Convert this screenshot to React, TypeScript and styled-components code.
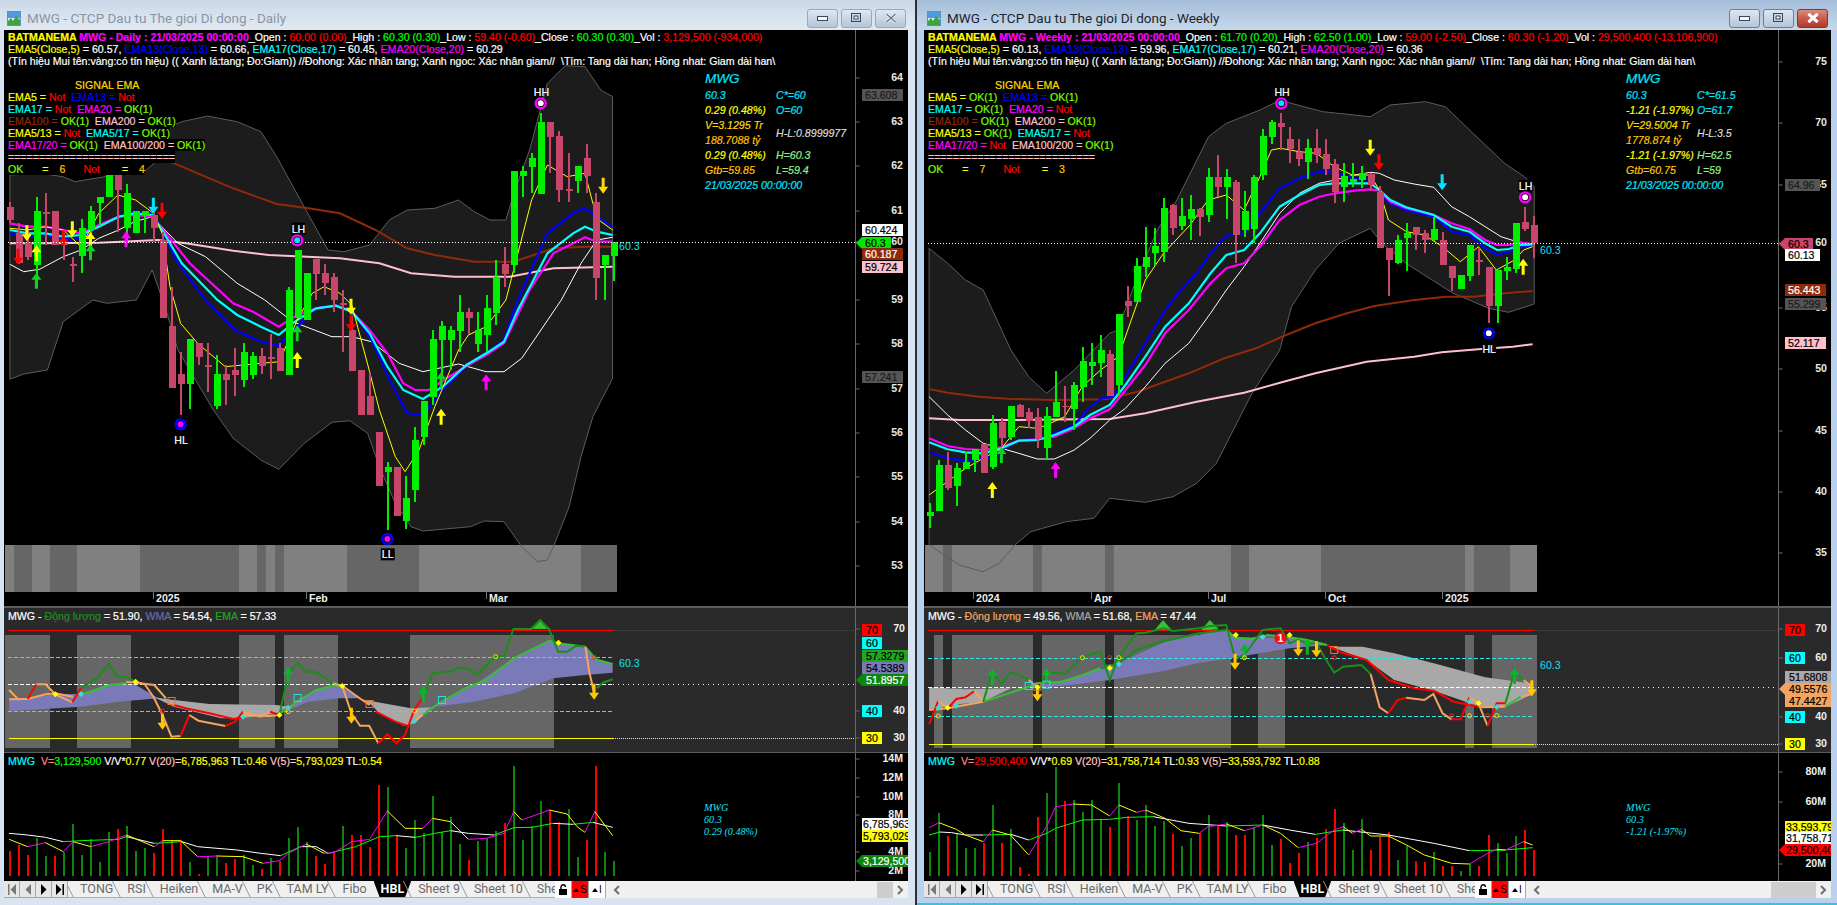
import React from 'react';
import styled, { createGlobalStyle } from 'styled-components';

const Global = createGlobalStyle`
  html, body { margin: 0; padding: 0; background: #d6e3f2; overflow: hidden; }
  #root { width: 1837px; height: 905px; }
`;

const SANS = '"Liberation Sans", Arial, sans-serif';
const UI = 'Roboto, "Noto Sans", sans-serif';

const Desktop = styled.div`
  display: flex;
  width: 1837px;
  height: 905px;
`;
const Divider = styled.div`
  flex: 0 0 2px;
  background: #2a3038;
`;
const Win = styled.section<{ $w: number; $active?: boolean; $pl: number; $pr: number }>`
  flex: 0 0 ${p => p.$w}px;
  box-sizing: border-box;
  height: 905px;
  display: flex;
  flex-direction: column;
  padding: 0 ${p => p.$pr}px 0 ${p => p.$pl}px;
  background: ${p => (p.$active ? '#b9d1ec' : '#d8e4f2')};
  ${p => (p.$active ? 'border-bottom: 2px solid #35c4d8;' : '')}
`;
const TitleBar = styled.header<{ $active?: boolean; $pl: number; $pr: number }>`
  flex: 0 0 30px;
  display: flex;
  align-items: center;
  gap: 6px;
  box-sizing: border-box;
  padding-top: 6px;
  margin: 0 ${p => -p.$pr}px 0 ${p => -p.$pl}px;
  padding-left: ${p => p.$pl + 3}px;
  padding-right: 9px;
  background: ${p =>
    p.$active
      ? 'linear-gradient(180deg,#a4bdd8 0%,#b4cae1 45%,#c6d8ea 100%)'
      : 'linear-gradient(180deg,#c9d7e6 0%,#d7e2ee 50%,#e0e9f3 100%)'};
`;
const TitleText = styled.span<{ $active?: boolean }>`
  font: 13.5px ${UI};
  color: ${p => (p.$active ? '#1c2530' : '#8a95a3')};
  white-space: nowrap;
  flex: 1;
`;
const WinButtons = styled.div`
  display: flex;
  gap: 3px;
`;
const WinButton = styled.div<{ $close?: boolean; $active?: boolean }>`
  width: 31px;
  height: 19px;
  box-sizing: border-box;
  display: flex;
  align-items: center;
  justify-content: center;
  border: 1px solid ${p => (p.$close && p.$active ? '#7c3a33' : p.$active ? '#6d7f95' : '#9aa7b6')};
  border-radius: 3px;
  background: ${p =>
    p.$close && p.$active
      ? 'linear-gradient(180deg,#dc8d80 0%,#c85a4c 50%,#b23a2c 100%)'
      : 'linear-gradient(180deg,#dfe8f2 0%,#c9d6e5 50%,#b5c5d7 100%)'};
`;
const Panes = styled.div`
  flex: 0 0 851px;
  display: flex;
  flex-direction: column;
  background: #000;
`;
const PricePane = styled.div`
  position: relative;
  flex: 0 0 576px;
  overflow: hidden;
`;
const IndPane = styled.div`
  position: relative;
  flex: 0 0 144px;
  background: #2a2a2a;
  overflow: hidden;
`;
const VolPane = styled.div`
  position: relative;
  flex: 0 0 128px;
  background: #000;
  overflow: hidden;
`;
const Sep = styled.div<{ $h: number }>`
  flex: 0 0 ${p => p.$h}px;
  background: #5e5e5e;
`;
const ChartSvg = styled.svg`
  display: block;
  width: 100%;
  height: 100%;
  font-family: ${SANS};
`;
const Legend = styled.div`
  position: absolute;
  top: 1px;
  left: 4px;
  font: 10.6px/12px ${SANS};
  color: #fff;
  white-space: pre;
  -webkit-text-stroke: 0.2px;
`;
const Row = styled.div<{ $pl?: number }>`
  height: 12px;
  padding-left: ${p => p.$pl || 0}px;
`;
const Boxed = styled.span`
  display: inline-block;
  background: #000;
  height: 12px;
`;
const Seg = styled.span<{ $c: string; $ml?: number; $b?: boolean }>`
  color: ${p => p.$c};
  margin-left: ${p => p.$ml || 0}px;
  font-weight: ${p => (p.$b ? 700 : 400)};
`;
const Info = styled.div<{ $left: number }>`
  position: absolute;
  left: ${p => p.$left}px;
  top: 40px;
  display: grid;
  grid-template-columns: 71px auto;
  grid-template-rows: 18px;
  grid-auto-rows: 15px;
  font: italic 10.6px/15px ${SANS};
  white-space: nowrap;
  -webkit-text-stroke: 0.2px;
`;
const InfoTitle = styled.div`
  grid-column: 1 / 3;
  font-size: 13.5px;
  line-height: 18px;
  color: #00e5ff;
`;
const InfoCell = styled.div<{ $c: string; $span?: number }>`
  color: ${p => p.$c};
  grid-row: span ${p => p.$span || 1};
  align-self: center;
`;
const PaneTitle = styled.div`
  position: absolute;
  top: 1px;
  left: 4px;
  font: 10.6px/14px ${SANS};
  color: #fff;
  white-space: pre;
  -webkit-text-stroke: 0.2px;
`;
const SerifNote = styled.div<{ $left: number }>`
  position: absolute;
  left: ${p => p.$left}px;
  top: 49px;
  font: italic 10.2px/12px "Liberation Serif", "Times New Roman", serif;
  color: #12e0f0;
`;
const TabBar = styled.div`
  flex: 0 0 17px;
  display: flex;
  background: #f0f0f0;
  font: 12.5px/16px ${UI};
  color: #6a6a6a;
  box-sizing: border-box;
`;
const NavGroup = styled.div`
  flex: 0 0 64px;
  display: flex;
`;
const NavBtn = styled.div`
  flex: 1;
  display: flex;
  align-items: center;
  justify-content: center;
  background: #e6e6e6;
  border-right: 1px solid #a6a6a6;
  border-bottom: 1px solid #a6a6a6;
  box-sizing: border-box;
`;
const Tabs = styled.div`
  flex: 0 0 487px;
  display: flex;
  padding-left: 5px;
  box-sizing: border-box;
  overflow: hidden;
  border-bottom: 1px solid #b0b0b0;
`;
const Tab = styled.div<{ $on?: boolean }>`
  position: relative;
  flex: 0 0 auto;
  padding: 0 7px;
  white-space: pre;
  ${p =>
    p.$on
      ? `background:#000;color:#fff;font-weight:700;clip-path:polygon(0 0,100% 0,calc(100% - 6px) 100%,6px 100%);`
      : `&::before{content:'';position:absolute;left:-4px;top:0;height:17px;width:1px;background:#9a9a9a;transform:skewX(26deg);}`}
`;
const MiniBtn = styled.div<{ $red?: boolean }>`
  flex: 0 0 17px;
  display: flex;
  align-items: center;
  justify-content: center;
  gap: 1px;
  box-sizing: border-box;
  background: ${p => (p.$red ? '#ff0000' : '#fff')};
  border-right: 1px solid #a8a8a8;
  font: 10px/16px ${SANS};
  color: #000;
`;
const ScrollArea = styled.div`
  flex: 1;
  display: flex;
  align-items: center;
  padding: 0 4px 0 7px;
  background: #f0f0f0;
`;
const ScrollThumb = styled.div<{ $w: number }>`
  margin-left: auto;
  margin-right: 4px;
  width: ${p => p.$w}px;
  height: 16px;
  background: #cdcdcd;
`;

// ---------------------------------------------- data
type P = [number, number];
type C = [number, number, number, number, string];

const candlesL: C[] = [
  [202,207,220,223,'r'],[223,233,263,264,'r'],[230,242,257,260,'r'],[197,211,265,287,'g'],[193,212,212,245,'r'],
  [211,211,245,245,'r'],[233,243,243,260,'r'],[257,264,264,282,'r'],[219,228,256,273,'g'],[206,211,230,253,'g'],
  [197,197,203,226,'g'],[172,172,197,197,'g'],[172,172,190,232,'r'],[184,193,228,243,'g'],[211,211,233,233,'g'],
  [211,211,215,233,'g'],[210,215,228,242,'r'],[232,240,318,318,'r'],[287,326,388,388,'r'],[352,374,384,415,'r'],
  [339,339,384,409,'g'],[343,343,357,365,'r'],[343,365,365,392,'r'],[355,374,406,409,'g'],[365,374,380,405,'r'],
  [348,370,375,396,'r'],[343,352,380,387,'g'],[352,356,375,379,'g'],[348,356,366,374,'r'],[334,357,357,379,'r'],
  [343,348,371,371,'r'],[287,290,375,375,'g'],[250,250,318,318,'g'],[273,273,320,320,'g'],[259,259,274,300,'r'],
  [264,273,283,295,'r'],[273,277,300,312,'r'],[290,303,303,352,'r'],[316,330,371,371,'r'],[370,370,415,415,'r'],
  [374,396,415,415,'r'],[432,432,486,486,'r'],[462,467,472,530,'g'],[467,467,516,516,'r'],[476,498,521,529,'g'],
  [427,440,490,502,'g'],[401,401,437,445,'g'],[330,339,397,405,'g'],[321,326,340,377,'g'],[326,330,340,370,'g'],
  [295,312,331,352,'g'],[308,312,318,334,'r'],[312,330,344,352,'g'],[295,308,335,352,'g'],[260,277,313,325,'g'],
  [247,264,274,287,'r'],[171,171,265,273,'g'],[166,171,176,197,'g'],[153,158,167,193,'g'],[113,122,194,194,'g'],
  [122,122,137,173,'r'],[131,136,190,202,'r'],[153,189,189,202,'r'],[166,166,181,193,'g'],[144,158,176,193,'r'],
  [193,202,278,300,'r'],[255,255,265,300,'g'],[242,242,256,281,'g'],
];

const candlesR: C[] = [
  [1210,1237,1247,1285,'g'],[1080,1095,1233,1233,'g'],[1057,1095,1165,1170,'r'],[1090,1105,1157,1217,'g'],[1055,1085,1107,1107,'g'],
  [1047,1047,1080,1115,'g'],[1032,1032,1120,1120,'r'],[945,968,1100,1107,'g'],[955,965,1015,1040,'r'],[918,918,1012,1020,'g'],
  [912,915,950,952,'r'],[925,935,962,985,'r'],[925,952,1017,1045,'r'],[920,948,1045,1077,'g'],[813,905,950,950,'g'],
  [857,917,917,967,'r'],[845,855,927,990,'g'],[742,783,860,905,'g'],[730,787,797,855,'g'],[705,750,790,830,'g'],
  [750,762,888,888,'r'],[642,642,855,885,'g'],[558,604,617,650,'r'],[474,498,605,605,'g'],[380,472,500,530,'g'],
  [385,437,458,497,'g'],[295,323,455,485,'g'],[313,315,385,405,'r'],[295,348,378,390,'g'],[285,327,357,420,'g'],
  [325,327,352,408,'r'],[205,232,345,365,'g'],[165,232,262,290,'r'],[208,232,262,357,'g'],[240,245,405,490,'r'],
  [273,333,390,412,'g'],[225,230,387,430,'g'],[88,108,225,240,'g'],[60,67,110,132,'g'],[40,70,80,150,'r'],
  [82,118,147,188,'r'],[118,155,177,198,'r'],[118,144,186,237,'g'],[88,145,165,188,'r'],[118,163,208,225,'r'],
  [178,193,277,310,'r'],[190,228,260,305,'g'],[190,237,247,260,'g'],[198,218,240,265,'g'],[220,222,255,273,'r'],
  [258,275,445,445,'r'],[445,445,480,587,'r'],[405,420,488,492,'g'],[370,400,415,513,'g'],[382,382,405,450,'r'],
  [390,400,420,460,'r'],[350,388,420,422,'g'],[397,420,495,495,'r'],[498,498,535,572,'r'],[525,525,567,567,'g'],
  [435,435,527,542,'g'],[445,480,480,525,'r'],[502,502,617,670,'r'],[510,510,617,668,'g'],[472,502,513,540,'g'],
  [368,368,507,518,'g'],[322,365,387,392,'r'],[348,375,430,475,'r'],
];

type Arrow = [number, number, 'u' | 'd', string];
type Ring = [number, number, string, string];

const L = {
  bbUpper: [[25,525],[100,520],[160,530],[190,545],[240,535],[370,510],[390,490],[430,380],[460,365],[525,348],[600,365],[660,395],[700,470],[760,600],[830,750],[870,755],[935,735],[985,660],[1030,630],[1100,625],[1160,600],[1200,635],[1240,660],[1280,660],[1300,580],[1340,450],[1385,250],[1430,197],[1480,200],[1520,270],[1550,290]] as P[],
  bbLower: [[1550,1135],[1500,1250],[1470,1370],[1440,1520],[1400,1640],[1385,1680],[1360,1685],[1320,1640],[1275,1565],[1225,1563],[1190,1580],[1070,1593],[1040,1580],[1000,1510],[960,1400],[930,1300],[885,1262],[840,1267],[770,1330],[705,1408],[660,1380],[590,1315],[540,1230],[500,1150],[450,1050],[420,930],[385,810],[345,900],[270,910],[235,900],[160,965],[120,1110],[60,1122],[25,1138]] as P[],
  blue: [[25,700],[70,710],[115,705],[160,715],[180,720],[205,715],[250,680],[300,650],[340,635],[385,640],[410,690],[450,790],[520,900],[595,990],[660,1025],[705,1037],[752,980],[800,925],[850,916],[890,930],[940,1020],[990,1150],[1030,1240],[1070,1245],[1120,1170],[1180,1095],[1230,1060],[1275,1020],[1310,900],[1385,700],[1450,640],[1480,625],[1510,650],[1550,680]] as P[],
  cyan: [[25,690],[70,700],[115,700],[160,710],[205,705],[250,680],[300,650],[340,640],[385,645],[415,700],[460,790],[550,900],[600,945],[660,980],[705,1005],[752,960],[800,925],[850,917],[890,935],[935,1000],[980,1100],[1020,1170],[1070,1197],[1120,1160],[1180,1095],[1230,1060],[1275,1025],[1310,930],[1385,760],[1450,700],[1480,680],[1510,695],[1550,705]] as P[],
  mag: [[25,670],[70,680],[115,680],[160,690],[205,700],[250,675],[300,650],[340,645],[385,650],[420,700],[480,790],[590,910],[640,935],[705,980],[752,945],[800,925],[850,917],[890,935],[935,990],[980,1060],[1020,1150],[1050,1170],[1085,1170],[1130,1135],[1185,1095],[1230,1065],[1275,1030],[1340,870],[1400,760],[1480,712],[1510,725],[1550,725]] as P[],
  white: [[25,793],[60,815],[100,808],[160,770],[205,750],[250,715],[300,690],[340,665],[385,650],[450,730],[520,770],[600,850],[670,900],[740,965],[840,1010],[890,1010],[940,1025],[1010,1090],[1070,1115],[1160,1092],[1230,1115],[1275,1115],[1320,1075],[1420,900],[1470,790],[1510,720],[1550,712]] as P[],
  yellow: [[25,685],[70,690],[115,680],[160,690],[205,740],[250,640],[298,585],[343,600],[388,640],[410,700],[430,860],[457,970],[500,1030],[570,1100],[615,1095],[707,1085],[752,960],[790,880],[820,860],[860,880],[890,915],[935,1115],[960,1230],[1000,1370],[1025,1415],[1060,1350],[1100,1220],[1160,1050],[1185,1005],[1230,980],[1280,900],[1345,600],[1385,495],[1435,530],[1480,520],[1500,610],[1515,660],[1550,690]] as P[],
  brown: [[25,380],[430,485],[500,520],[590,565],[700,612],[780,625],[860,640],[950,690],[1030,745],[1100,765],[1200,785],[1300,785],[1400,745],[1480,740],[1550,740]] as P[],
  pink: [[25,730],[100,730],[250,728],[400,720],[470,730],[590,752],[680,765],[860,775],[960,790],[1040,820],[1150,830],[1290,830],[1400,805],[1550,800]] as P[],
  arrows: [[68,700,'d','#ffff00'],[183,688,'d','#ffff00'],[1526,557,'d','#ffd800'],[92,760,'u','#ffff00'],[229,720,'u','#ffff00'],[92,842,'u','#10d020'],[229,757,'u','#10d020'],[46,770,'d','#ff0000'],[160,715,'d','#ff0000'],[410,632,'d','#ff0000'],[388,617,'d','#00e5ff'],[319,718,'u','#ff00ff'],[1230,1147,'u','#ff00ff'],[888,920,'d','#ffff00'],[888,970,'d','#ff0000'],[752,1000,'u','#10d020'],[1116,1140,'u','#10d020'],[752,1080,'u','#ffff00'],[1116,1250,'u','#ffff00']] as Arrow[],
  rings: [[1368,310,'#ff00ff','#ffffff'],[752,721,'#ff00ff','#00e5ff'],[457,1273,'#0000ff','#ff00ff'],[980,1617,'#0000ff','#ff00ff']] as Ring[],
  pivots: [['HH',1370,275,false],['LH',755,686,true],['HL',458,1319,false],['LL',981,1663,true]] as [string,number,number,boolean][],
  strip: [[12,35,1],[35,81,0],[81,126,1],[126,195,0],[195,354,1],[354,604,0],[604,650,1],[650,673,0],[673,695,1],[695,718,0],[718,878,1],[878,1060,0],[1060,1469,1],[1469,1562,0]] as [number,number,number][],
  dates: [['2025',153],['Feb',306],['Mar',486]] as [string,number][],
  axis: [[64,78],[63,122],[62,166],[61,211],[60,242],[59,300],[58,344],[57,389],[56,433],[55,477],[54,522],[53,566]] as [number,number][],
  tags: [['63.608',95,'#555555','#1c1c1c',41],['57.241',377,'#555555','#1c1c1c',41],['60.424',230,'#ffffff','#000',41],['60.3',243,'#00e800','#000',29,'a'],['60.187',254,'#8f2a08','#fff',41],['59.724',267,'#ffc0cb','#000',41]] as any[],
};

const R = {
  bbUpper: [[23,445],[70,490],[115,540],[160,570],[230,750],[275,830],[320,880],[390,810],[480,700],[500,690],[547,540],[600,390],[650,300],[730,110],[775,70],[860,30],[912,0],[939,10],[1019,35],[1139,50],[1189,15],[1279,5],[1329,20],[1399,100],[1479,190],[1529,230],[1554,260]] as P[],
  bbLower: [[1554,612],[1489,637],[1439,625],[1349,580],[1229,490],[1169,430],[1139,385],[1060,430],[1000,510],[940,620],[910,750],[840,880],[750,1090],[700,1150],[640,1190],[570,1207],[480,1195],[440,1255],[370,1265],[280,1295],[240,1335],[200,1390],[160,1415],[100,1395],[30,1340],[23,1335]] as P[],
  blue: [[23,1057],[70,1075],[115,1082],[160,1075],[190,1070],[206,1050],[250,1020],[297,1017],[340,1000],[390,975],[430,920],[460,895],[490,890],[520,830],[560,750],[620,630],[660,570],[700,520],[735,460],[775,407],[820,400],[860,340],[910,265],[960,235],[1010,215],[1040,215],[1100,235],[1140,240],[1162,275],[1190,310],[1230,330],[1300,350],[1345,395],[1390,405],[1430,445],[1460,465],[1490,455],[1520,440],[1550,435]] as P[],
  cyan: [[23,1027],[70,1048],[115,1057],[160,1060],[206,1045],[250,1022],[297,1020],[340,1005],[390,980],[430,945],[480,915],[520,855],[570,770],[620,680],[680,610],[735,520],[775,465],[820,450],[860,400],[910,320],[960,285],[1010,255],[1050,250],[1100,250],[1140,250],[1162,270],[1190,300],[1230,322],[1300,345],[1345,380],[1390,395],[1430,430],[1460,450],[1490,447],[1520,435],[1550,433]] as P[],
  mag: [[23,1015],[70,1038],[115,1047],[160,1050],[206,1042],[250,1022],[297,1018],[340,1010],[390,985],[430,955],[480,928],[520,870],[570,795],[620,700],[680,630],[735,550],[775,505],[820,490],[860,440],[910,360],[960,315],[1010,290],[1050,280],[1100,272],[1140,268],[1162,272],[1190,305],[1230,325],[1300,345],[1345,370],[1390,387],[1430,420],[1460,435],[1490,435],[1520,428],[1550,432]] as P[],
  white: [[23,890],[70,945],[115,990],[160,1030],[206,1045],[250,1060],[297,1077],[340,1077],[390,1050],[430,1015],[480,960],[520,925],[570,860],[620,790],[680,730],[735,640],[775,570],[820,500],[860,430],[910,340],[960,280],[1010,250],[1050,240],[1100,225],[1140,217],[1162,220],[1200,240],[1250,252],[1300,262],[1345,320],[1390,350],[1430,380],[1470,410],[1510,425],[1550,432]] as P[],
  yellow: [[23,1185],[69,1145],[115,1105],[160,1075],[206,1045],[250,980],[297,985],[320,975],[366,950],[410,860],[457,810],[502,770],[570,540],[616,460],[683,375],[729,300],[775,285],[820,330],[860,230],[889,150],[912,145],[960,155],[1003,160],[1048,200],[1094,225],[1139,225],[1162,270],[1185,360],[1231,395],[1276,405],[1322,440],[1367,485],[1413,440],[1458,510],[1504,480],[1527,450],[1550,440]] as P[],
  brown: [[23,867],[70,878],[150,890],[230,897],[340,900],[470,898],[550,875],[680,820],[770,775],[850,745],[920,708],[1000,670],[1080,640],[1150,618],[1250,600],[1330,590],[1400,590],[1480,580],[1550,573]] as P[],
  pink: [[23,955],[100,960],[230,960],[400,958],[480,957],[570,940],[700,905],[820,878],[920,845],[1000,820],[1130,785],[1250,770],[1320,757],[1420,747],[1500,740],[1550,733]] as P[],
  arrows: [[183,1170,'u','#ffff00'],[206,1065,'u','#10d020'],[343,1110,'u','#ff00ff'],[1139,143,'d','#ffff00'],[1161,187,'d','#ff0000'],[1321,247,'d','#00e5ff'],[1526,500,'u','#ffff00']] as Arrow[],
  rings: [[914,10,'#ff00ff','#00e5ff'],[1531,292,'#ff00ff','#ffffff'],[1439,700,'#0000ff','#ffffff']] as Ring[],
  pivots: [['HH',916,-25,false],['LH',1532,257,true],['HL',1440,746,true]] as [string,number,number,boolean][],
  strip: [[12,35,1],[35,58,1],[58,81,0],[81,287,1],[287,309,0],[309,468,1],[468,491,0],[491,787,1],[787,832,0],[832,1014,1],[1014,1378,0],[1378,1401,1],[1401,1492,0],[1492,1562,1]] as [number,number,number][],
  dates: [['2024',973],['Apr',1091],['Jul',1208],['Oct',1325],['2025',1442]] as [string,number][],
  axis: [[75,62],[70,123],[65,185],[60,243],[55,308],[50,369],[45,431],[40,492],[35,553]] as [number,number][],
  tags: [['64.96',185,'#555555','#1c1c1c',35],['60.3',244,'#c8466a','#000',28,'a'],['60.13',255,'#ffffff','#000',35],['56.443',290,'#8f2a08','#fff',41],['55.299',304,'#555555','#1c1c1c',41],['52.117',343,'#ffc0cb','#000',41]] as any[],
};

const Gd = '#188f18', Gl = '#35c035', O = '#f4a460', Rd = '#ff0000';

const indL = {
  bands: [[12,126],[195,331],[604,695],[718,855],[1037,1401]] as P[],
  lv: { red: 121, c1: 202, w: 283, c2: 365, y: 445 },
  ribbons: [
    ['#7a7ab8',[[23,328],[70,325],[140,313],[205,312],[270,285],[340,282],[400,325],[300,335],[205,350],[100,358],[23,363]]],
    ['#a8a8a8',[[390,322],[440,330],[530,342],[700,345],[730,350],[700,370],[610,385],[560,385],[440,350]]],
    ['#7a7ab8',[[718,365],[750,335],[800,300],[860,287],[910,325],[860,325],[780,335]]],
    ['#a8a8a8',[[910,327],[1040,355],[1090,352],[1050,400],[1020,407],[960,370],[940,345]]],
    ['#7a7ab8',[[1060,375],[1110,340],[1200,285],[1300,205],[1390,152],[1440,165],[1480,170],[1505,205],[1550,220],[1550,248],[1480,255],[1400,265],[1300,310],[1200,335],[1090,352]]],
    [Gl,[[1340,117],[1367,88],[1392,117]]],
  ] as [string,P[]][],
  mom: [
    [O,[[23,300],[45,327],[70,327]]],[Rd,[[70,327],[92,283]]],[O,[[92,283],[115,283],[140,313],[183,337]]],[Rd,[[183,337],[205,295]]],
    [Gd,[[205,295],[250,260],[275,222],[297,260],[320,262],[343,275]]],[O,[[343,275],[366,283],[388,320],[411,375],[434,440],[457,438]]],
    [Rd,[[457,438],[479,375]]],[O,[[479,375],[502,392],[570,408]]],[Rd,[[570,408],[595,395],[615,365]]],[O,[[615,365],[660,380],[683,365]]],
    [Rd,[[683,365],[707,375]]],[Gd,[[707,375],[729,255],[752,218],[775,245],[798,245],[843,280]]],[O,[[843,280],[866,288],[889,370],[911,407],[934,407],[957,460]]],
    [Rd,[[957,460],[980,433],[1003,460],[1025,435],[1048,360],[1071,320]]],
    [Gd,[[1071,320],[1094,250],[1116,245],[1139,245],[1162,233],[1185,235],[1207,255],[1253,200],[1276,198],[1299,117],[1345,117],[1367,90],[1390,120],[1412,185],[1435,185],[1458,167],[1481,170]]],
    [O,[[1481,170],[1490,240],[1503,310]]],[Gd,[[1510,295],[1525,278],[1550,268]]],
  ] as [string,P[]][],
  ema: [
    [O,[[23,328],[70,327],[115,313],[140,310],[185,320]]],[Gl,[[205,312],[230,305],[275,285],[320,280]]],[O,[[320,275],[390,285],[420,325]]],
    [Rd,[[440,345],[470,355],[530,370],[590,387],[610,383]]],[O,[[615,375],[680,378],[707,375]]],[Gl,[[707,370],[730,355],[750,335],[800,300],[843,287],[866,287]]],
    [O,[[866,287],[910,325],[935,345]]],[Rd,[[950,365],[1000,395],[1030,407]]],[O,[[1045,395],[1070,375]]],
    [Gl,[[1070,375],[1110,340],[1180,293],[1230,270],[1300,205],[1390,152],[1412,160],[1480,170],[1510,210],[1550,222]]],
  ] as [string,P[]][],
  diamondsY: [[140,313],[343,275],[707,375],[866,288],[1413,158]] as P[],
  diamondsC: [[205,312],[729,353],[615,380],[1048,393]] as P[],
  sqC: [[753,324],[1118,330]] as P[],
  sqO: [[434,333],[935,342]] as P[],
  holoY: [[729,365],[1254,200],[1049,363]] as P[],
  holoR: [[411,363],[1503,202]] as P[],
  arrows: [[411,395,'d','#ffc800'],[889,377,'d','#ffc800'],[1503,305,'d','#ffc800'],[729,255,'u','#10b030'],[1071,312,'u','#10b030']] as Arrow[],
  oy: 590,
  lastX: 1550,
};
const indR = {
  bands: [[35,58],[81,287],[309,468],[491,787],[855,923],[1378,1401],[1447,1562]] as P[],
  lv: { red: 91, c1: 175, w: 262, c2: 350, y: 433 },
  ribbons: [
    ['#a8a8a8',[[23,262],[115,268],[230,265],[160,305],[100,312],[23,330]]],
    ['#7a7ab8',[[270,262],[330,250],[410,225],[470,195],[500,190],[620,125],[730,98],[775,90],[800,110],[860,115],[935,110],[1030,135],[935,145],[860,160],[787,175],[700,190],[620,212],[480,240],[380,255],[320,262]]],
    ['#a8a8a8',[[1040,140],[1120,140],[1200,160],[1300,190],[1430,232],[1545,250],[1545,285],[1480,320],[1420,322],[1300,272],[1200,240],[1130,180]]],
    [Gl,[[592,92],[615,60],[638,92]]],
    [Gl,[[710,92],[733,60],[756,88]]],
  ] as [string,P[]][],
  mom: [
    [Rd,[[23,373],[46,303]]],[O,[[46,303],[70,325]]],[Rd,[[70,325],[92,297],[115,292],[138,273]]],[O,[[138,273],[160,305]]],
    [Gd,[[160,305],[183,215],[206,253],[229,217],[252,225],[275,240]]],[O,[[275,240],[297,262]]],
    [Gd,[[297,280],[320,220],[343,218],[366,222],[411,170],[457,155],[480,240],[503,170],[548,100],[571,98],[616,85],[640,93],[706,85],[733,78],[775,75],[797,175],[821,165],[867,90],[912,85],[935,130],[957,120],[980,130],[1003,130],[1025,175],[1048,218],[1071,200],[1117,195],[1140,222]]],
    [O,[[1140,222],[1163,322],[1185,340]]],[Rd,[[1185,340],[1208,300],[1230,293]]],[O,[[1230,293],[1276,300],[1299,282],[1322,340],[1345,358]]],
    [Rd,[[1345,358],[1368,358],[1390,292]]],[O,[[1390,292],[1413,310],[1436,378]]],[Rd,[[1436,378],[1459,310],[1481,310]]],
    [Gd,[[1481,310],[1504,215],[1527,240]]],[O,[[1527,240],[1550,262]]],
  ] as [string,P[]][],
  ema: [
    [O,[[23,330],[70,325],[160,305]]],
    [Gl,[[160,305],[270,262],[297,250],[360,245],[411,225],[457,205]]],
    [Gd,[[457,205],[503,190],[548,150],[620,122],[706,100],[775,90]]],
    [Gl,[[775,90],[800,115],[840,116],[880,105],[935,112],[980,120],[1030,135]]],
    [Rd,[[1030,135],[1060,155],[1130,180],[1185,240],[1250,265],[1300,272],[1350,305],[1420,322]]],
    [O,[[1420,322],[1480,320]]],[Gl,[[1480,320],[1520,290]]],[O,[[1520,290],[1550,282]]],
  ] as [string,P[]][],
  diamondsY: [[70,323],[297,262],[480,204],[799,105],[935,105],[1413,310]] as P[],
  diamondsC: [[46,323],[92,317],[503,192],[867,111],[1390,305],[1459,321]] as P[],
  sqC: [[275,258],[320,254]] as P[],
  sqO: [[297,260],[1048,150]] as P[],
  holoY: [[46,348],[411,173],[503,173],[821,173],[1390,347],[1459,347]] as P[],
  holoR: [[480,173],[1048,173],[1345,347],[1436,347]] as P[],
  arrows: [[183,230,'u','#10b030'],[320,228,'u','#10b030'],[821,155,'u','#10b030'],[980,140,'u','#10b030'],[1504,228,'u','#10b030'],[297,280,'d','#ffc800'],[797,185,'d','#ffc800'],[957,145,'d','#ffc800'],[1003,148,'d','#ffc800'],[1548,265,'d','#ffc800']] as Arrow[],
  oy: 600,
  lastX: 1550,
  badge: [912,115] as P,
};

const volL = {
  base: 857,
  bars: 'r783 r765 r795 g745 g798 r798 g785 g703 g795 g748 g816 g727 r717 g708 g783 g775 r790 r717 r750 r750 g816 r852 g798 g795 r820 r808 g795 g825 r838 g805 r813 g745 g712 g757 r798 r822 r787 g708 r735 r735 r770 r585 g591 r735 g775 g690 g730 g618 g725 g682 g763 r810 g753 g745 g723 r700 g528 g750 g708 g633 r660 r697 g657 g800 r750 r528 g786 g813'.split(' '),
  ma: [[23,730],[70,735],[115,742],[160,755],[205,752],[300,748],[320,740],[390,760],[460,755],[500,770],[600,780],[660,790],[710,797],[760,770],[800,770],[830,790],[900,770],[960,740],[1003,737],[1050,742],[1100,730],[1140,722],[1185,730],[1250,735],[1300,713],[1345,712],[1400,700],[1450,703],[1500,697],[1550,712]] as P[],
  v5: [[23,748],[70,770],[115,758],[160,785],[185,755],[230,770],[275,755],[320,735],[390,770],[412,752],[457,752],[500,800],[550,798],[615,800],[665,820],[707,812],[730,790],[775,762],[820,790],[845,788],[890,755],[935,748],[980,663],[1025,715],[1070,715],[1094,685],[1140,695],[1185,748],[1230,745],[1275,730],[1300,665],[1320,690],[1390,660],[1435,672],[1460,710],[1480,727],[1505,665],[1550,737]] as P[],
  oy: 590,
};
const volR = {
  base: 827,
  bars: 'g757 g640 r708 g700 g745 g745 r730 g616 r730 g688 r800 r823 r652 g580 g502 r604 g600 g637 g600 g657 r681 g549 r649 g660 g616 g678 g664 r702 g738 g714 r700 g645 r678 g665 r705 r705 g680 g645 g735 r717 r790 r760 g726 r714 r687 r627 g670 g750 g657 r750 r710 r697 g780 g737 r783 r786 g757 r798 r798 g813 g790 r797 r705 g729 g760 g708 r690 r750'.split(' '),
  ma: [[23,705],[50,696],[80,698],[115,705],[160,705],[230,703],[275,720],[320,700],[343,685],[411,660],[480,658],[525,652],[590,650],[680,670],[775,678],[867,675],[935,690],[1000,703],[1070,690],[1185,705],[1300,730],[1390,752],[1480,750],[1550,743]] as P[],
  v5: [[23,683],[48,668],[92,688],[115,705],[160,725],[183,690],[229,705],[275,765],[320,680],[343,620],[388,612],[434,615],[480,648],[503,615],[548,637],[571,630],[620,655],[660,692],[706,700],[729,680],[775,672],[821,692],[867,675],[912,700],[957,743],[1003,730],[1048,690],[1071,680],[1094,700],[1117,688],[1140,708],[1185,708],[1231,735],[1276,765],[1345,790],[1390,792],[1436,760],[1459,748],[1481,750],[1527,725],[1550,735]] as P[],
  oy: 600,
};

const num = (n: number) => n.toFixed(1);

// ---------------------------------------------- drawing helpers
const ArrowMark = ({ x, y, dir, c }: { x: number; y: number; dir: 'u' | 'd'; c: string }) => {
  const s = dir === 'u' ? -1 : 1;
  const pts: P[] = [[x, y + 8 * s], [x + 5, y + 1 * s], [x + 1.5, y + 1 * s], [x + 1.5, y - 8 * s], [x - 1.5, y - 8 * s], [x - 1.5, y + 1 * s], [x - 5, y + 1 * s]];
  return <polygon points={pts.map(p => p.join(',')).join(' ')} fill={c} />;
};

const Tag = ({ x, y, w, bg, fg, text, arrow, center, pad = 3 }: any) => (
  <g>
    {arrow && <polygon points={`${x},${y - 6} ${x - 6},${y} ${x},${y + 6}`} fill={bg} />}
    <rect x={x} y={y - 6} width={w} height={12} fill={bg} shapeRendering="crispEdges" />
    <text x={center ? x + w / 2 : x + pad} y={y + 4} fontSize={10.6} fill={fg} stroke={fg} strokeWidth={0.2} textAnchor={center ? 'middle' : 'start'}>{text}</text>
  </g>
);

const ln = (pts: P[], fx: (x: number) => number, fy: (y: number) => number) => pts.map(p => `${num(fx(p[0]))},${num(fy(p[1]))}`).join(' ');

const PriceChart = ({ ox, left, width, axisX, tagX, oy, d, candles, cy, dotY, numEnd, note, noteY }: any) => {
  const fx = (x: number) => ox + x / 2.53;
  const fy = (y: number) => oy + y / 3;
  const bbPoly = ln([...d.bbUpper, ...d.bbLower], fx, fy);
  return (
    <ChartSvg viewBox={`${left} 30 ${width} 576`}>
      <polygon points={bbPoly} fill="#1c1c1c" />
      {d.strip.map((s: number[], i: number) => (
        <rect key={i} x={fx(s[0])} y={545} width={(s[1] - s[0]) / 2.53} height={47} fill={s[2] ? '#808080' : '#666666'} shapeRendering="crispEdges" />
      ))}
      <polygon points={bbPoly} fill="none" stroke="#5c5c5c" strokeWidth={1} />
      <polyline points={ln(d.brown, fx, fy)} fill="none" stroke="#8f2a08" strokeWidth={2} />
      <polyline points={ln(d.pink, fx, fy)} fill="none" stroke="#ffc0cb" strokeWidth={2} />
      <polyline points={ln(d.white, fx, fy)} fill="none" stroke="#ffffff" strokeWidth={1} />
      <polyline points={ln(d.blue, fx, fy)} fill="none" stroke="#0000ff" strokeWidth={2.2} />
      <polyline points={ln(d.mag, fx, fy)} fill="none" stroke="#ff00ff" strokeWidth={2.2} />
      <polyline points={ln(d.cyan, fx, fy)} fill="none" stroke="#00ffff" strokeWidth={2.2} />
      <polyline points={ln(d.yellow, fx, fy)} fill="none" stroke="#ffff00" strokeWidth={1} />
      {candles.map((c: C, i: number) => {
        const x = Math.round(ox + 9.88 + i * 9.01);
        const col = c[4] === 'g' ? '#00f000' : '#c8466a';
        const h = Math.max(cy(c[2]) - cy(c[1]), 1.5);
        return (
          <g key={i} shapeRendering="crispEdges">
            <rect x={x - 1} y={cy(c[0])} width={2} height={cy(c[3]) - cy(c[0])} fill={col} />
            <rect x={x - 3.5} y={cy(c[1])} width={7} height={h} fill={col} />
          </g>
        );
      })}
      {d.arrows.map((a: Arrow, i: number) => <ArrowMark key={i} x={fx(a[0])} y={fy(a[1])} dir={a[2]} c={a[3]} />)}
      <line x1={left + 4} x2={axisX} y1={dotY} y2={dotY} stroke="#fff" strokeDasharray="1 2" />
      {d.pivots.map((p: any, i: number) => (
        <g key={i}>
          {p[3] && <rect x={fx(p[1]) - 7} y={fy(p[2]) - 6} width={14} height={12} fill="#000" />}
          <text x={fx(p[1])} y={fy(p[2]) + 4} fontSize={10.6} fill="#fff" stroke="#fff" strokeWidth={0.2} textAnchor="middle">{p[0]}</text>
        </g>
      ))}
      {d.rings.map((r: Ring, i: number) => (
        <g key={i}>
          <circle cx={fx(r[0])} cy={fy(r[1])} r={5} fill="#000" stroke={r[2]} strokeWidth={2.4} />
          <circle cx={fx(r[0])} cy={fy(r[1])} r={3} fill={r[3]} />
        </g>
      ))}
      <text x={note} y={noteY} fontSize={10.6} fill="#12e0f0">60.3</text>
      <line x1={axisX} x2={axisX} y1={30} y2={606} stroke="#6a6a6a" />
      {d.axis.map((a: number[]) => (
        <g key={a[0]}>
          <line x1={axisX} x2={axisX + 4} y1={a[1]} y2={a[1]} stroke="#6a6a6a" />
          <text x={numEnd} y={a[1] + 3} fontSize={10.6} fontWeight={700} fill="#e8e8e8" textAnchor="end">{a[0]}</text>
        </g>
      ))}
      {d.tags.map((t: any[]) => (
        <Tag key={t[0]} x={tagX} y={t[1]} w={t[4]} bg={t[2]} fg={t[3]} text={t[0]} arrow={t[5]} />
      ))}
      {d.dates.map((t: any[]) => (
        <g key={t[1]}>
          <rect x={t[1]} y={592} width={1} height={7} fill="#777" />
          <text x={t[1] + 3} y={602} fontSize={10.6} fontWeight={700} fill="#eee">{t[0]}</text>
        </g>
      ))}
    </ChartSvg>
  );
};

const IndChart = ({ ox, left, width, axisX, d, numEnd, tags, levels, note }: any) => {
  const fx = (x: number) => ox + x / 2.53;
  const fy = (y: number) => d.oy + y / 3;
  const lineEnd = fx(d.lastX);
  const L0 = fx(20);
  return (
    <ChartSvg viewBox={`${left} 608 ${width} 144`}>
      {d.bands.map((b: P, i: number) => (
        <rect key={i} x={fx(b[0])} y={635} width={(b[1] - b[0]) / 2.53} height={112.5} fill="#666666" shapeRendering="crispEdges" />
      ))}
      {d.ribbons.map((r: any[], i: number) => <polygon key={i} points={ln(r[1], fx, fy)} fill={r[0]} />)}
      <line x1={L0} x2={lineEnd} y1={fy(d.lv.red)} y2={fy(d.lv.red)} stroke="#ff0000" strokeWidth={1} shapeRendering="crispEdges" />
      <line x1={lineEnd} x2={axisX} y1={fy(d.lv.red)} y2={fy(d.lv.red)} stroke="#ff0000" strokeDasharray="1 1" shapeRendering="crispEdges" />
      <line x1={L0} x2={lineEnd} y1={fy(d.lv.c1)} y2={fy(d.lv.c1)} stroke="#2fe6e6" strokeDasharray="4 2" shapeRendering="crispEdges" />
      <line x1={L0} x2={lineEnd} y1={fy(d.lv.c2)} y2={fy(d.lv.c2)} stroke="#2fe6e6" strokeDasharray="4 2" shapeRendering="crispEdges" />
      <line x1={L0} x2={lineEnd} y1={fy(d.lv.w)} y2={fy(d.lv.w)} stroke="#fff" strokeDasharray="4 2" shapeRendering="crispEdges" />
      <line x1={lineEnd} x2={axisX} y1={fy(d.lv.w)} y2={fy(d.lv.w)} stroke="#fff" strokeDasharray="1 4" shapeRendering="crispEdges" />
      <line x1={fx(23)} x2={lineEnd} y1={fy(d.lv.y)} y2={fy(d.lv.y)} stroke="#ffff00" shapeRendering="crispEdges" />
      <line x1={lineEnd} x2={axisX} y1={fy(d.lv.y)} y2={fy(d.lv.y)} stroke="#ffff00" strokeDasharray="1 1" shapeRendering="crispEdges" />
      {d.ema.map((s: any[], i: number) => <polyline key={i} points={ln(s[1], fx, fy)} fill="none" stroke={s[0]} strokeWidth={2} />)}
      {d.mom.map((s: any[], i: number) => <polyline key={i} points={ln(s[1], fx, fy)} fill="none" stroke={s[0]} strokeWidth={2} />)}
      {d.arrows.map((a: Arrow, i: number) => <ArrowMark key={i} x={fx(a[0])} y={fy(a[1])} dir={a[2]} c={a[3]} />)}
      {d.sqC.map((p: P, i: number) => <rect key={i} x={fx(p[0]) - 3.5} y={fy(p[1]) - 3.5} width={7} height={7} fill="none" stroke="#20e0e8" />)}
      {d.sqO.map((p: P, i: number) => <rect key={i} x={fx(p[0]) - 3.5} y={fy(p[1]) - 3.5} width={7} height={7} fill="none" stroke="#f07030" />)}
      {d.holoY.map((p: P, i: number) => <circle key={i} cx={fx(p[0])} cy={fy(p[1])} r={2} fill="none" stroke="#ffe000" />)}
      {d.holoR.map((p: P, i: number) => <circle key={i} cx={fx(p[0])} cy={fy(p[1])} r={2} fill="none" stroke="#ff2020" />)}
      {d.diamondsY.map((p: P, i: number) => { const x = fx(p[0]), y = fy(p[1]); return <polygon key={i} points={`${x},${y - 3} ${x + 3},${y} ${x},${y + 3} ${x - 3},${y}`} fill="#ffff00" />; })}
      {d.diamondsC.map((p: P, i: number) => { const x = fx(p[0]), y = fy(p[1]); return <polygon key={i} points={`${x},${y - 3} ${x + 3},${y} ${x},${y + 3} ${x - 3},${y}`} fill="#40d8d8" />; })}
      {d.badge && (
        <g>
          <circle cx={fx(d.badge[0])} cy={fy(d.badge[1])} r={6} fill="#f01010" />
          <text x={fx(d.badge[0])} y={fy(d.badge[1]) + 4} fontSize={10.6} fontWeight={700} fill="#fff" textAnchor="middle">1</text>
        </g>
      )}
      <text x={note[0]} y={note[1]} fontSize={10.6} fill="#12e0f0">60.3</text>
      <line x1={axisX} x2={axisX} y1={608} y2={752} stroke="#6a6a6a" />
      {levels.map((l: number[]) => (
        <g key={l[0]}>
          <line x1={axisX} x2={axisX + 4} y1={l[1]} y2={l[1]} stroke="#6a6a6a" />
          <text x={numEnd} y={l[1] + 3} fontSize={10.6} fontWeight={700} fill="#eee" textAnchor="end">{l[0]}</text>
        </g>
      ))}
      {tags.map((t: any, i: number) => <Tag key={i} {...t} />)}
    </ChartSvg>
  );
};

const VolChart = ({ ox, left, width, axisX, d, ticks, numEnd, tags }: any) => {
  const fx = (x: number) => ox + x / 2.53;
  const fy = (y: number) => d.oy + y / 3;
  const segs = (pts: P[], up: string, down: string) =>
    pts.slice(1).map((p, i) => (
      <line key={i} x1={fx(pts[i][0])} y1={fy(pts[i][1])} x2={fx(p[0])} y2={fy(p[1])} stroke={p[1] < pts[i][1] ? up : down} strokeWidth={1} />
    ));
  return (
    <ChartSvg viewBox={`${left} 753 ${width} 128`}>
      {d.bars.map((b: string, i: number) => {
        const x = Math.round(ox + 9.88 + i * 9.01);
        const top = fy(parseInt(b.slice(1), 10));
        return <rect key={i} x={x - 1} y={top} width={2} height={fy(d.base) - top} fill={b[0] === 'g' ? '#0c860c' : '#ff0000'} shapeRendering="crispEdges" />;
      })}
      {segs(d.ma, '#00ff00', '#ffffff')}
      {segs(d.v5, '#ff00ff', '#ffff00')}
      <line x1={axisX} x2={axisX} y1={753} y2={881} stroke="#6a6a6a" />
      {ticks.map((t: any[]) => (
        <g key={t[0]}>
          <line x1={axisX} x2={axisX + 4} y1={t[1]} y2={t[1]} stroke="#6a6a6a" />
          <text x={numEnd} y={t[1] + 3} fontSize={10.6} fontWeight={700} fill="#eee" textAnchor="end">{t[0]}</text>
        </g>
      ))}
      {tags.map((t: any, i: number) => <Tag key={i} {...t} />)}
    </ChartSvg>
  );
};

const AppIcon = () => (
  <svg width="14" height="15" viewBox="0 0 14 15">
    <rect x="0.5" y="0.5" width="13" height="14" fill="#dfeefb" stroke="#5b8fc7" />
    <rect x="1" y="1" width="12" height="6" fill="#4f9ae0" />
    <path d="M1 14 L1 10 L4 7 L6 10 L9 5 L13 9 L13 14 Z" fill="#3fa33f" />
  </svg>
);
const MinGlyph = () => (<svg width="11" height="7" viewBox="0 0 11 7"><rect x="0.5" y="1.5" width="10" height="4" fill="#f4f7fb" stroke="#3a4654" /></svg>);
const MaxGlyph = () => (<svg width="11" height="10" viewBox="0 0 11 10"><rect x="0.5" y="0.5" width="9" height="8" fill="none" stroke="#3a4654" /><rect x="3" y="3" width="4" height="3" fill="#f4f7fb" stroke="#3a4654" /></svg>);
const CloseGlyph = ({ light }: { light?: boolean }) => (
  <svg width="12" height="10" viewBox="0 0 12 10">
    <path d="M1.5 1 L10.5 9 M10.5 1 L1.5 9" stroke={light ? '#fff' : '#f2f5f9'} strokeWidth="3" />
    <path d="M1.5 1 L10.5 9 M10.5 1 L1.5 9" stroke={light ? '#fff' : '#6a7583'} strokeWidth={light ? 2.6 : 1.4} />
  </svg>
);
const NavGlyph = ({ kind, c }: { kind: string; c: string }) => (
  <svg width="10" height="11" viewBox="0 0 10 11">
    {kind === 'first' && <path d="M1 0h1.5v11H1zM9 0v11L3.5 5.5z" fill={c} />}
    {kind === 'prev' && <path d="M8 0v11L2.5 5.5z" fill={c} />}
    {kind === 'next' && <path d="M2 0v11L7.5 5.5z" fill={c} />}
    {kind === 'last' && <path d="M1 0v11L6.5 5.5zM7.5 0H9v11H7.5z" fill={c} />}
  </svg>
);
const LockGlyph = () => (
  <svg width="10" height="11" viewBox="0 0 10 11">
    <path d="M3 5V3a2.2 2.2 0 0 1 4.4 0" fill="none" stroke="#000" strokeWidth="1.4" />
    <rect x="1" y="5" width="8" height="6" fill="#000" />
  </svg>
);
const Tri = () => (<svg width="6" height="4" viewBox="0 0 6 4"><path d="M0 4 L3 0 L6 4 Z" fill="#000" /></svg>);
const Chevron = ({ dir }: { dir: 'l' | 'r' }) => (
  <svg width="7" height="10" viewBox="0 0 7 10">
    <path d={dir === 'l' ? 'M6 1 L2 5 L6 9' : 'M1 1 L5 5 L1 9'} fill="none" stroke="#6e6e6e" strokeWidth="2" />
  </svg>
);

const TAB_NAMES = ['TONG', 'RSI', 'Heiken', 'MA-V', 'PK', 'TAM LY', 'Fibo', 'HBL', 'Sheet 9', 'Sheet 10', 'Sheet 11'];

const Sheets = ({ thumb }: { thumb: number }) => (
  <TabBar>
    <NavGroup>
      <NavBtn><NavGlyph kind="first" c="#777" /></NavBtn>
      <NavBtn><NavGlyph kind="prev" c="#777" /></NavBtn>
      <NavBtn><NavGlyph kind="next" c="#000" /></NavBtn>
      <NavBtn><NavGlyph kind="last" c="#000" /></NavBtn>
    </NavGroup>
    <Tabs>
      {TAB_NAMES.map(n => <Tab key={n} $on={n === 'HBL'}>{n}</Tab>)}
    </Tabs>
    <MiniBtn><LockGlyph /></MiniBtn>
    <MiniBtn $red><Tri />S</MiniBtn>
    <MiniBtn><Tri />I</MiniBtn>
    <ScrollArea>
      <Chevron dir="l" />
      <ScrollThumb $w={thumb} />
      <Chevron dir="r" />
    </ScrollArea>
  </TabBar>
);

type SegT = [string, string, number?, boolean?];
const Segs = ({ s }: { s: SegT[] }) => (
  <>
    {s.map((x, i) => <Seg key={i} $c={x[1]} $ml={x[2]} $b={x[3]}>{x[0]}</Seg>)}
  </>
);

const Y = '#ffff00', B = '#0000ff', Cy = '#00ffff', M = '#ff00ff', W = '#ffffff', G = '#00ff00', RR = '#ff0000', BR = '#8f2a08', PK = '#ffc0cb', OK = '#7cfc00', GO = '#ffc000';

const HINT = '(Tín hiệu Mui tên:vàng:có tín hiệu) (( Xanh lá:tang; Đo:Giam)) //Đohong: Xác nhân tang; Xanh ngoc: Xác nhân giam//  \\Tím: Tang dài han; Hồng nhat: Giam dài han\\';

const LegendBlock = ({ line1, line2, sig, ok, not }: any) => (
  <Legend>
    <Row><Segs s={line1} /></Row>
    <Row><Segs s={line2} /></Row>
    <Row>{HINT}</Row>
    <Row />
    <Row $pl={67}><Boxed><Seg $c="#ffd700">SIGNAL EMA</Seg></Boxed></Row>
    {sig.map((r: SegT[], i: number) => <Row key={i}><Boxed><Segs s={r} /></Boxed></Row>)}
    <Row><Boxed><Seg $c="#ffc8c8">===========================</Seg></Boxed></Row>
    <Row>
      <Boxed>
        <Seg $c={OK}>OK</Seg><Seg $c={Y} $ml={19}>=</Seg><Seg $c="#ffc000" $ml={11}>{ok}</Seg>
        <Seg $c={RR} $ml={18}>Not</Seg><Seg $c={Y} $ml={22}>=</Seg><Seg $c="#ffc000" $ml={11}>{not}</Seg>
      </Boxed>
    </Row>
  </Legend>
);

const sigRow = (...items: [string, string, boolean][]): SegT[] => {
  const out: SegT[] = [];
  items.forEach((it, i) => {
    out.push([(i ? '  ' : '') + it[0] + ' = ', it[1]]);
    out.push([it[2] ? 'OK(1)' : 'Not', it[2] ? OK : RR]);
  });
  return out;
};

const infoRows = (v: any) => (
  <Info $left={v.left}>
    <InfoTitle>MWG</InfoTitle>
    <InfoCell $c="#00e5ff">60.3</InfoCell><InfoCell $c="#00e5ff">{v.c}</InfoCell>
    <InfoCell $c={Y}>{v.chg}</InfoCell><InfoCell $c="#00e5ff">{v.o}</InfoCell>
    <InfoCell $c="#ffd800">{v.v}</InfoCell><InfoCell $c="#dcdcdc" $span={2}>{v.hl}</InfoCell>
    <InfoCell $c={GO}>{v.ty}</InfoCell>
    <InfoCell $c={Y}>{v.chg}</InfoCell><InfoCell $c="#90ee90">{v.h}</InfoCell>
    <InfoCell $c={GO}>{v.gtb}</InfoCell><InfoCell $c="#90ee90">{v.l}</InfoCell>
    <InfoCell $c="#00e5ff">21/03/2025 00:00:00</InfoCell><InfoCell $c="#00e5ff" />
  </Info>
);

export default function App() {
  const cyL = (y: number) => y;
  const cyR = (y: number) => 100 + y / 3;
  return (
    <Desktop>
      <Global />
      <Win $w={915} $pl={4} $pr={7}>
        <TitleBar $pl={4} $pr={7}>
          <AppIcon />
          <TitleText>MWG - CTCP Dau tu The gioi Di dong - Daily</TitleText>
          <WinButtons>
            <WinButton><MinGlyph /></WinButton>
            <WinButton><MaxGlyph /></WinButton>
            <WinButton><CloseGlyph /></WinButton>
          </WinButtons>
        </TitleBar>
        <Panes>
          <PricePane>
            <PriceChart ox={0} left={4} width={904} axisX={855.5} tagX={862} oy={0} d={L} candles={candlesL} cy={cyL} dotY={242.5} numEnd={903} note={619} noteY={250} />
            <LegendBlock
              line1={[['BATMANEMA', Y, 0, true], [' MWG - Daily : 21/03/2025 00:00:00', M, 0, true], ['_Open : ', W], ['60.00 (0.00)', RR], ['_High : ', W], ['60.30 (0.30)', G], ['_Low : ', W], ['59.40 (-0.60)', RR], ['_Close : ', W], ['60.30 (0.30)', G], ['_Vol : ', W], ['3,129,500 (-934,000)', RR]]}
              line2={[['EMA5(Close,5)', Y], [' = 60.57, ', W], ['EMA13(Close,13)', B], [' = 60.66, ', W], ['EMA17(Close,17)', Cy], [' = 60.45, ', W], ['EMA20(Close,20)', M], [' = 60.29', W]]}
              sig={[
                sigRow(['EMA5', Y, false], ['EMA13', B, false]),
                sigRow(['EMA17', Cy, false], ['EMA20', M, true]),
                sigRow(['EMA100', BR, true], ['EMA200', PK, true]),
                sigRow(['EMA5/13', Y, false], ['EMA5/17', Cy, true]),
                sigRow(['EMA17/20', M, true], ['EMA100/200', PK, true]),
              ]}
              ok="6" not="4"
            />
            {infoRows({ left: 701, c: 'C*=60', chg: '0.29 (0.48%)', o: 'O=60', v: 'V=3.1295 Tr', hl: 'H-L:0.8999977', ty: '188.7088 tỷ', h: 'H=60.3', gtb: 'Gtb=59.85', l: 'L=59.4' })}
          </PricePane>
          <Sep $h={2} />
          <IndPane>
            <IndChart ox={0} left={4} width={904} axisX={855.5} d={indL} numEnd={905} note={[619, 667]}
              levels={[[70, 629], [40, 711], [30, 738]]}
              tags={[
                { x: 862, y: 630, w: 20, bg: '#ff0000', fg: '#000', text: '70', center: true },
                { x: 862, y: 643, w: 20, bg: '#00ffff', fg: '#000', text: '60', center: true },
                { x: 862, y: 656, w: 46, bg: '#22a622', fg: '#000', text: '57.3279', pad: 4 },
                { x: 862, y: 668, w: 46, bg: '#7a7ab8', fg: '#000', text: '54.5389', pad: 4 },
                { x: 862, y: 680, w: 46, bg: '#0c860c', fg: '#fff', text: '51.8957', arrow: true, pad: 4 },
                { x: 862, y: 711, w: 20, bg: '#00ffff', fg: '#000', text: '40', center: true },
                { x: 862, y: 738, w: 20, bg: '#ffff00', fg: '#000', text: '30', center: true },
              ]} />
            <PaneTitle>
              <Seg $c={W}>MWG - </Seg><Seg $c="#1f8f1f">Động lượng</Seg><Seg $c={W}> = 51.90, </Seg><Seg $c="#6a6ab4">WMA</Seg><Seg $c={W}> = 54.54, </Seg><Seg $c="#22a622">EMA</Seg><Seg $c={W}> = 57.33</Seg>
            </PaneTitle>
          </IndPane>
          <Sep $h={1} />
          <VolPane>
            <VolChart ox={0} left={4} width={904} axisX={855.5} d={volL} numEnd={903}
              ticks={[['14M', 759], ['12M', 778], ['10M', 797], ['8M', 815], ['4M', 852], ['2M', 871]]}
              tags={[
                { x: 862, y: 824, w: 46, bg: '#fff', fg: '#000', text: '6,785,963', pad: 1 },
                { x: 862, y: 836, w: 46, bg: '#ffff00', fg: '#000', text: '5,793,029', pad: 1 },
                { x: 862, y: 861, w: 46, bg: '#0c860c', fg: '#fff', text: '3,129,500', arrow: true, pad: 1 },
              ]} />
            <PaneTitle>
              <Seg $c={Cy}>MWG  </Seg><Seg $c="#ff8080">V=</Seg><Seg $c="#00ff00">3,129,500</Seg><Seg $c={W}> V/V*</Seg><Seg $c={Y}>0.77</Seg><Seg $c="#ffc8c8"> V(20)=</Seg><Seg $c={Y}>6,785,963</Seg><Seg $c={W}> TL:</Seg><Seg $c={Y}>0.46</Seg><Seg $c="#ffc8c8"> V(5)=</Seg><Seg $c={Y}>5,793,029</Seg><Seg $c={W}> TL:</Seg><Seg $c={Y}>0.54</Seg>
            </PaneTitle>
            <SerifNote $left={700}>MWG<br />60.3<br />0.29 (0.48%)</SerifNote>
          </VolPane>
          <Sheets thumb={16} />
        </Panes>
      </Win>
      <Divider />
      <Win $w={920} $active $pl={7} $pr={6}>
        <TitleBar $active $pl={7} $pr={6}>
          <AppIcon />
          <TitleText $active>MWG - CTCP Dau tu The gioi Di dong - Weekly</TitleText>
          <WinButtons>
            <WinButton $active><MinGlyph /></WinButton>
            <WinButton $active><MaxGlyph /></WinButton>
            <WinButton $active $close><CloseGlyph light /></WinButton>
          </WinButtons>
        </TitleBar>
        <Panes>
          <PricePane>
            <PriceChart ox={920} left={924} width={907} axisX={1778.5} tagX={1785} oy={100} d={R} candles={candlesR} cy={cyR} dotY={243.5} numEnd={1827} note={1540} noteY={254} />
            <LegendBlock
              line1={[['BATMANEMA', Y, 0, true], [' MWG - Weekly : 21/03/2025 00:00:00', M, 0, true], ['_Open : ', W], ['61.70 (0.20)', G], ['_High : ', W], ['62.50 (1.00)', G], ['_Low : ', W], ['59.00 (-2.50)', RR], ['_Close : ', W], ['60.30 (-1.20)', RR], ['_Vol : ', W], ['29,500,400 (-13,106,900)', RR]]}
              line2={[['EMA5(Close,5)', Y], [' = 60.13, ', W], ['EMA13(Close,13)', B], [' = 59.96, ', W], ['EMA17(Close,17)', Cy], [' = 60.21, ', W], ['EMA20(Close,20)', M], [' = 60.36', W]]}
              sig={[
                sigRow(['EMA5', Y, true], ['EMA13', B, true]),
                sigRow(['EMA17', Cy, true], ['EMA20', M, false]),
                sigRow(['EMA100', BR, true], ['EMA200', PK, true]),
                sigRow(['EMA5/13', Y, true], ['EMA5/17', Cy, false]),
                sigRow(['EMA17/20', M, false], ['EMA100/200', PK, true]),
              ]}
              ok="7" not="3"
            />
            {infoRows({ left: 702, c: 'C*=61.5', chg: '-1.21 (-1.97%)', o: 'O=61.7', v: 'V=29.5004 Tr', hl: 'H-L:3.5', ty: '1778.874 tỷ', h: 'H=62.5', gtb: 'Gtb=60.75', l: 'L=59' })}
          </PricePane>
          <Sep $h={2} />
          <IndPane>
            <IndChart ox={920} left={924} width={907} axisX={1778.5} d={indR} numEnd={1827} note={[1540, 669]}
              levels={[[70, 629], [60, 658], [40, 717], [30, 744]]}
              tags={[
                { x: 1785, y: 630, w: 20, bg: '#ff0000', fg: '#000', text: '70', center: true },
                { x: 1785, y: 658, w: 20, bg: '#00ffff', fg: '#000', text: '60', center: true },
                { x: 1785, y: 677, w: 46, bg: '#a8a8a8', fg: '#000', text: '51.6808', pad: 4 },
                { x: 1785, y: 689, w: 46, bg: '#f4a460', fg: '#000', text: '49.5576', arrow: true, pad: 4 },
                { x: 1785, y: 701, w: 46, bg: '#f4a460', fg: '#000', text: '47.4427', pad: 4 },
                { x: 1785, y: 717, w: 20, bg: '#00ffff', fg: '#000', text: '40', center: true },
                { x: 1785, y: 744, w: 20, bg: '#ffff00', fg: '#000', text: '30', center: true },
              ]} />
            <PaneTitle>
              <Seg $c={W}>MWG - </Seg><Seg $c="#f4a460">Động lượng</Seg><Seg $c={W}> = 49.56, </Seg><Seg $c="#a8a8a8">WMA</Seg><Seg $c={W}> = 51.68, </Seg><Seg $c="#f4a460">EMA</Seg><Seg $c={W}> = 47.44</Seg>
            </PaneTitle>
          </IndPane>
          <Sep $h={1} />
          <VolPane>
            <VolChart ox={920} left={924} width={907} axisX={1778.5} d={volR} numEnd={1826}
              ticks={[['80M', 772], ['60M', 802], ['20M', 864]]}
              tags={[
                { x: 1785, y: 827, w: 46, bg: '#ffff00', fg: '#000', text: '33,593,792', pad: 1 },
                { x: 1785, y: 838, w: 46, bg: '#fff', fg: '#000', text: '31,758,714', pad: 1 },
                { x: 1785, y: 850, w: 46, bg: '#ff0000', fg: '#000', text: '29,500,400', arrow: true, pad: 1 },
              ]} />
            <PaneTitle>
              <Seg $c={Cy}>MWG  </Seg><Seg $c="#ff8080">V=</Seg><Seg $c={RR}>29,500,400</Seg><Seg $c={W}> V/V*</Seg><Seg $c={Y}>0.69</Seg><Seg $c="#ffc8c8"> V(20)=</Seg><Seg $c={Y}>31,758,714</Seg><Seg $c={W}> TL:</Seg><Seg $c={Y}>0.93</Seg><Seg $c="#ffc8c8"> V(5)=</Seg><Seg $c={Y}>33,593,792</Seg><Seg $c={W}> TL:</Seg><Seg $c={Y}>0.88</Seg>
            </PaneTitle>
            <SerifNote $left={702}>MWG<br />60.3<br />-1.21 (-1.97%)</SerifNote>
          </VolPane>
          <Sheets thumb={45} />
        </Panes>
      </Win>
    </Desktop>
  );
}
